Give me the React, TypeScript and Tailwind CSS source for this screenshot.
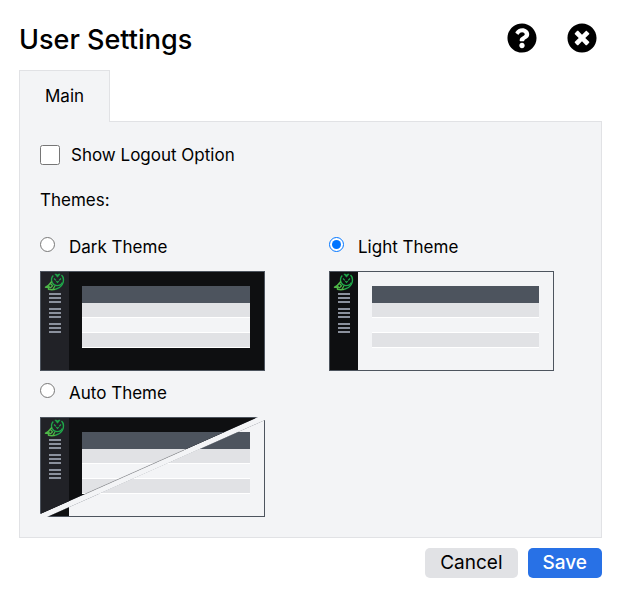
import React, { useState } from "react";
import { FaQuestionCircle, FaTimesCircle } from "react-icons/fa";

const themes = [
  { id: "dark", label: "Dark Theme" },
  { id: "light", label: "Light Theme" },
  { id: "auto", label: "Auto Theme" },
];

const Owl = () => (
  <g fill="none" strokeLinejoin="round">
    <g stroke="#1fa84a">
      <path d="M13.300 4.500 C11.300 6.500 11.200 9.500 12.300 11.800 C13.300 13.800 15 14.600 17 14.600 C19.500 14.600 21.500 13.500 22.300 11.500" strokeWidth="1.300" />
      <path d="M21.500 4 C23.800 6 24.200 10.500 22.300 13.500 C20.800 16 18.500 17.600 15.500 18.200" strokeWidth="1.400" />
      <path d="M14.800 3 H16.500 L17.500 4 L18.500 3 H20.200 L17.500 6.300 Z" fill="#1fa84a" strokeWidth="0.500" />
      <path d="M14 7.500 L15.800 9.300 M21 7.500 L19.200 9.300 M16.300 10 L17.500 11.500 L18.700 10" strokeWidth="1.200" />
    </g>
    <g stroke="#4fb848">
      <path d="M11.800 10.500 C10 13 8.500 15 5.500 16.300 H8.500 V18.300 C11 18.800 13.500 18.700 15.500 18.200" strokeWidth="1.500" />
      <path d="M10.500 12.500 L12.500 14.800 L10.300 17 M15 15 L13 17.800 M8.300 15 L10.300 17" strokeWidth="1.200" />
    </g>
  </g>
);

const Screen = ({ dark, left = 42 }: { dark: boolean; left?: number }) => (
  <g shapeRendering="crispEdges">
    <rect width="225" height="100" fill="#4d545e" />
    <rect x="1" y="1" width="223" height="98" fill={dark ? "#0e0f11" : "#f3f4f6"} />
    <rect x="1" y="1" width="28" height="98" fill={dark ? "#212227" : "#0e0f11"} />
    <rect x={left} y="15" width={210 - left} height="17" fill="#4d545e" />
    <rect x={left} y="32" width={210 - left} height="14" fill="#e1e2e5" />
    <rect x={left} y="46" width={210 - left} height="1" fill="#ffffff" />
    <rect x={left} y="47" width={210 - left} height="14" fill="#f3f4f6" />
    <rect x={left} y="61" width={210 - left} height="1" fill="#ffffff" />
    <rect x={left} y="62" width={210 - left} height="14" fill="#e1e2e5" />
    <rect x={left} y="76" width={210 - left} height="1" fill="#ffffff" />
    {[22, 26, 30, 37, 41, 45, 52, 56, 60].map((y) => (
      <rect key={y} x="9" y={y} width="12" height="2" fill="#8b919d" />
    ))}
  </g>
);

const ThemePreview = ({ theme }: { theme: string }) => (
  <svg width="225" height="100" viewBox="0 0 225 100" className="block" aria-hidden="true">
    {theme === "auto" ? (
      <>
        <clipPath id="auto-dark">
          <path d="M0 0 H218 L0 97 Z" />
        </clipPath>
        <clipPath id="auto-light">
          <path d="M225 3 V100 H7 Z" />
        </clipPath>
        <g clipPath="url(#auto-light)">
          <Screen dark={false} />
        </g>
        <g clipPath="url(#auto-dark)">
          <Screen dark />
        </g>
        <path d="M144 33 L44 77.500" stroke="#a5a6a9" strokeWidth="0.600" />
      </>
    ) : (
      <Screen dark={theme === "dark"} left={theme === "light" ? 43 : 42} />
    )}
    <Owl />
  </svg>
);

const App = () => {
  const [theme, setTheme] = useState("light");
  const [showLogout, setShowLogout] = useState(false);

  return (
    <div className="bg-white pt-5 pr-[17px] pb-5 pl-[19px] font-['Inter','Liberation_Sans',sans-serif] text-[17px] text-black">
      <header className="flex items-center justify-between pr-[5px]">
        <h1 className="text-[27px] leading-10 font-medium">User Settings</h1>
        <div className="flex gap-[30px] pb-1 text-[30px]">
          <button type="button" aria-label="Help">
            <FaQuestionCircle />
          </button>
          <button type="button" aria-label="Close">
            <FaTimesCircle />
          </button>
        </div>
      </header>

      <div role="tablist" className="mt-[10px] flex">
        <button
          type="button"
          role="tab"
          aria-selected="true"
          className="relative -mb-px h-[52px] border border-b-0 border-[#e1e2e5] bg-[#f3f4f6] px-[25px]"
        >
          Main
        </button>
      </div>

      <main className="border border-[#e1e2e5] bg-[#f3f4f6] px-5 pt-5 pb-5">
        <label className="flex items-center gap-[11px] leading-[26px]">
          <input
            type="checkbox"
            checked={showLogout}
            onChange={(e) => setShowLogout(e.target.checked)}
            className="h-5 w-5"
          />
          Show Logout Option
        </label>

        <fieldset className="mt-5">
          <legend className="leading-6">Themes:</legend>
          <div className="mt-[22px] flex flex-wrap gap-x-16 gap-y-[9px]">
            {themes.map(({ id, label }) => (
              <label key={id} className="block">
                <span className="flex items-start gap-[14px] pb-[11px] leading-[26px]">
                  <input
                    type="radio"
                    name="theme"
                    value={id}
                    checked={theme === id}
                    onChange={() => setTheme(id)}
                    className="mt-[3px] h-[15px] w-[15px]"
                  />
                  {label}
                </span>
                <ThemePreview theme={id} />
              </label>
            ))}
          </div>
        </fieldset>
      </main>

      <footer className="mt-[10px] flex justify-end gap-[10px] text-[19px] leading-[30px]">
        <button type="button" className="rounded-[5px] bg-[#e1e2e5] px-[15px]">
          Cancel
        </button>
        <button type="button" className="rounded-[5px] bg-[#2871e6] px-[15px] font-medium text-white">
          Save
        </button>
      </footer>
    </div>
  );
};

export default App;
